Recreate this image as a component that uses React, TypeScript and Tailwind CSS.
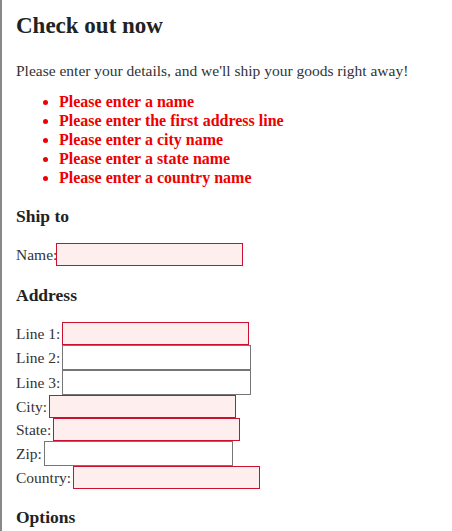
import React from "react";

const errInput =
  "h-[23px] w-[187px] border border-[#cc1030] bg-[#ffeeee] outline-none";
const okInput = "h-[25px] w-[189px] border border-[#767676] bg-white outline-none";

function Row({ label, error, gap = true }: { label: string; error: boolean; gap?: boolean }) {
  return (
    <div className="flex items-center">
      <span className={gap ? "mr-[2px]" : "-mr-[1px]"}>{label}</span>
      <input type="text" className={error ? errInput : okInput} />
    </div>
  );
}

export default function App() {
  const errors = [
    "Please enter a name",
    "Please enter the first address line",
    "Please enter a city name",
    "Please enter a state name",
    "Please enter a country name",
  ];
  return (
    <div
      className="min-h-[531px] w-[452px] overflow-hidden border-l-2 border-[#888888] bg-white pl-[14px] text-[15.5px] leading-[19px] text-[#333333]"
      style={{ fontFamily: '"Liberation Serif", serif' }}
    >
      <h1 className="pt-[12px] text-[23px] font-bold leading-[28px] text-[#222222]">Check out now</h1>
      <p className="mt-[21px]">Please enter your details, and we'll ship your goods right away!</p>
      <ul className="mt-[12px] list-disc pl-[43px] text-[16px] font-bold text-[#ee0000]">
        {errors.map((e) => (
          <li key={e} className="leading-[19px]">
            {e}
          </li>
        ))}
      </ul>
      <h3 className="mt-[18px] text-[17.5px] font-bold leading-[22px] text-[#222222]">Ship to</h3>
      <div className="mt-[16px]">
        <Row label="Name:" error gap={false} />
      </div>
      <h3 className="mt-[18px] text-[17.5px] font-bold leading-[22px] text-[#222222]">Address</h3>
      <div className="mt-[16px] flex flex-col">
        <Row label="Line 1:" error />
        <Row label="Line 2:" error={false} />
        <Row label="Line 3:" error={false} />
        <Row label="City:" error />
        <Row label="State:" error />
        <Row label="Zip:" error={false} />
        <Row label="Country:" error />
      </div>
      <h3 className="mt-[17px] text-[17.5px] font-bold leading-[22px] text-[#222222]">Options</h3>
    </div>
  );
}
